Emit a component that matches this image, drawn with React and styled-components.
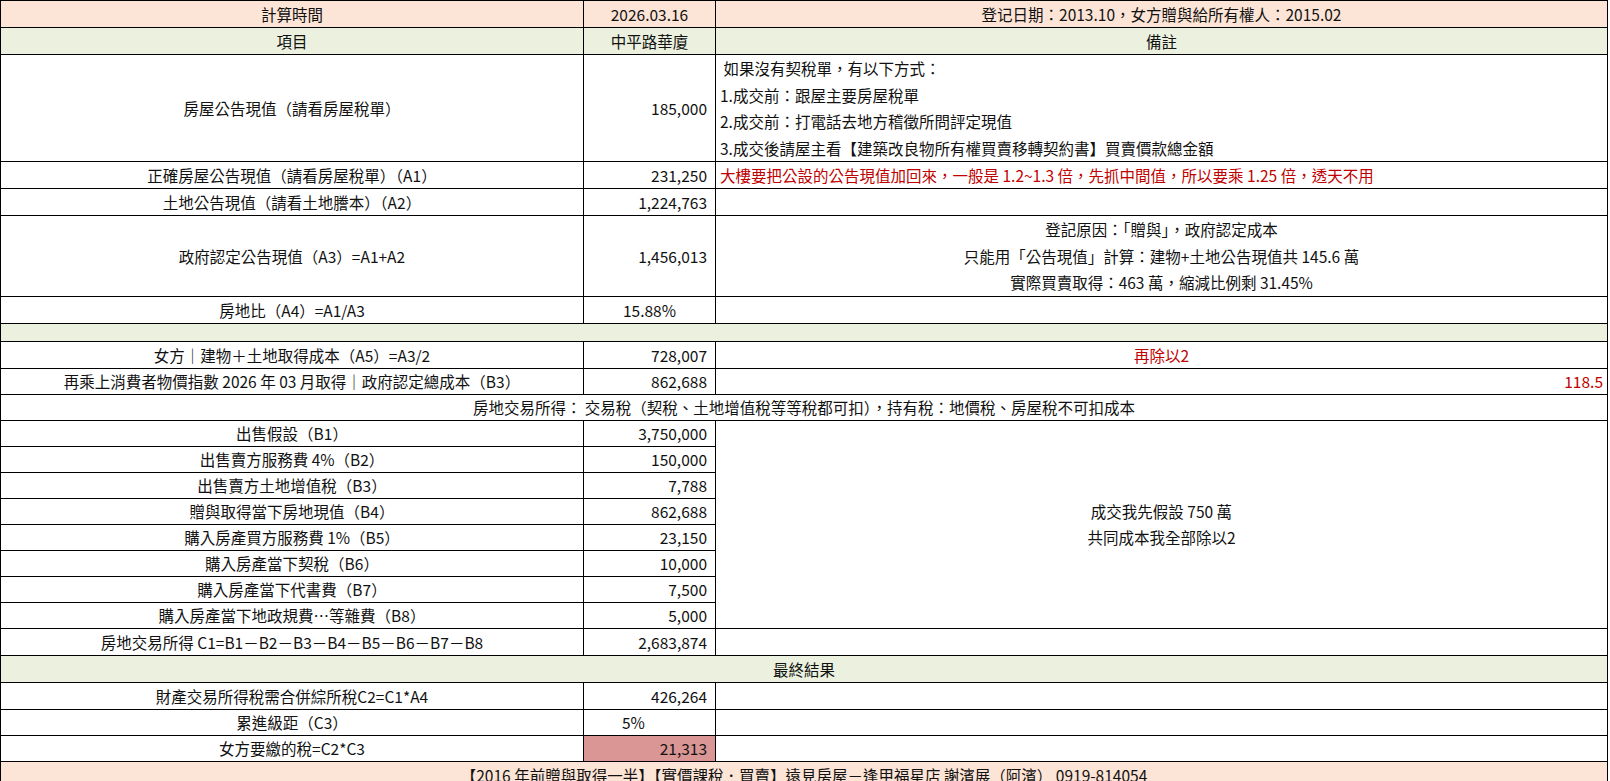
import React from "react"
import styled, { createGlobalStyle } from "styled-components"

const Global = createGlobalStyle`
    body {
        margin: 0;
        background: #fff;
        font-family: "Noto Sans CJK TC", "Liberation Sans", sans-serif;
    }
`

const Sheet = styled.table`
    border-collapse: collapse;
    table-layout: fixed;
    width: 1608px;
    font-size: 15.5px;
    color: #111;
`

const Row = styled.tr`
    height: ${(p) => p.h || 26}px;
    background: ${(p) => (p.tone === "peach" ? "#fce4d6" : p.tone === "green" ? "#ebf1de" : "#fff")};
`

const Cell = styled.td`
    border: 1px solid #000;
    padding: 0 ${(p) => (p.pad != null ? p.pad : 8)}px;
    line-height: 24px;
    white-space: nowrap;
    overflow: hidden;
    text-align: ${(p) => p.align || "center"};
    color: ${(p) => (p.red ? "#c00000" : "inherit")};
    background: ${(p) => (p.hl ? "#da9694" : "transparent")};
    vertical-align: middle;
`

const Lines = styled.div`
    line-height: 26.5px;
`

const rowsA = [
    ["正確房屋公告現值（請看房屋稅單）（A1）", "231,250"],
    ["土地公告現值（請看土地謄本）（A2）", "1,224,763"],
]

const rowsB = [
    ["出售假設（B1）", "3,750,000"],
    ["出售賣方服務費 4%（B2）", "150,000"],
    ["出售賣方土地增值稅（B3）", "7,788"],
    ["贈與取得當下房地現值（B4）", "862,688"],
    ["購入房產買方服務費 1%（B5）", "23,150"],
    ["購入房產當下契稅（B6）", "10,000"],
    ["購入房產當下代書費（B7）", "7,500"],
    ["購入房產當下地政規費…等雜費（B8）", "5,000"],
]

export default function App() {
    return (
        <>
            <Global />
            <Sheet>
                <colgroup>
                    <col style={{ width: 583 }} />
                    <col style={{ width: 132 }} />
                    <col />
                </colgroup>
                <tbody>
                    <Row tone="peach" h={27}>
                        <Cell>計算時間</Cell>
                        <Cell>2026.03.16</Cell>
                        <Cell>登记日期：2013.10，女方贈與給所有權人：2015.02</Cell>
                    </Row>
                    <Row tone="green" h={27}>
                        <Cell>項目</Cell>
                        <Cell>中平路華廈</Cell>
                        <Cell>備註</Cell>
                    </Row>
                    <Row h={107}>
                        <Cell>房屋公告現值（請看房屋稅單）</Cell>
                        <Cell align="right">185,000</Cell>
                        <Cell align="left" pad={4}>
                            <Lines>
                                <div>&nbsp;如果沒有契稅單，有以下方式：</div>
                                <div>1.成交前：跟屋主要房屋稅單</div>
                                <div>2.成交前：打電話去地方稽徵所問評定現值</div>
                                <div>3.成交後請屋主看【建築改良物所有權買賣移轉契約書】買賣價款總金額</div>
                            </Lines>
                        </Cell>
                    </Row>
                    {rowsA.map(([a, b], i) => (
                        <Row key={a} h={27}>
                            <Cell>{a}</Cell>
                            <Cell align="right">{b}</Cell>
                            {i === 0 ? (
                                <Cell align="left" red pad={4}>
                                    大樓要把公設的公告現值加回來，一般是 1.2~1.3 倍，先抓中間值，所以要乘 1.25 倍，透天不用
                                </Cell>
                            ) : (
                                <Cell />
                            )}
                        </Row>
                    ))}
                    <Row h={80}>
                        <Cell>政府認定公告現值（A3）=A1+A2</Cell>
                        <Cell align="right">1,456,013</Cell>
                        <Cell>
                            <Lines>
                                <div>登記原因：「贈與」，政府認定成本</div>
                                <div>只能用「公告現值」計算：建物+土地公告現值共 145.6 萬</div>
                                <div>實際買賣取得：463 萬，縮減比例剩 31.45%</div>
                            </Lines>
                        </Cell>
                    </Row>
                    <Row h={27}>
                        <Cell>房地比（A4）=A1/A3</Cell>
                        <Cell>15.88%</Cell>
                        <Cell />
                    </Row>
                    <Row tone="green" h={18}>
                        <Cell colSpan={3} />
                    </Row>
                    <Row h={27}>
                        <Cell>女方｜建物＋土地取得成本（A5）=A3/2</Cell>
                        <Cell align="right">728,007</Cell>
                        <Cell red>再除以2</Cell>
                    </Row>
                    <Row>
                        <Cell>再乘上消費者物價指數 2026 年 03 月取得｜政府認定總成本（B3）</Cell>
                        <Cell align="right">862,688</Cell>
                        <Cell align="right" red pad={4}>118.5</Cell>
                    </Row>
                    <Row>
                        <Cell colSpan={3}>房地交易所得： 交易稅（契稅、土地增值稅等等稅都可扣），持有稅：地價稅、房屋稅不可扣成本</Cell>
                    </Row>
                    {rowsB.map(([a, b], i) => (
                        <Row key={a}>
                            <Cell>{a}</Cell>
                            <Cell align="right">{b}</Cell>
                            {i === 0 && (
                                <Cell rowSpan={8}>
                                    <Lines>
                                        <div>成交我先假設 750 萬</div>
                                        <div>共同成本我全部除以2</div>
                                    </Lines>
                                </Cell>
                            )}
                        </Row>
                    ))}
                    <Row h={27}>
                        <Cell>房地交易所得 C1=B1－B2－B3－B4－B5－B6－B7－B8</Cell>
                        <Cell align="right">2,683,874</Cell>
                        <Cell />
                    </Row>
                    <Row tone="green" h={27}>
                        <Cell colSpan={3}>最終結果</Cell>
                    </Row>
                    <Row h={27}>
                        <Cell>財產交易所得稅需合併綜所稅C2=C1*A4</Cell>
                        <Cell align="right">426,264</Cell>
                        <Cell />
                    </Row>
                    <Row>
                        <Cell>累進級距（C3）</Cell>
                        <Cell align="left" pad={38}>5%</Cell>
                        <Cell />
                    </Row>
                    <Row>
                        <Cell>女方要繳的稅=C2*C3</Cell>
                        <Cell align="right" hl>21,313</Cell>
                        <Cell />
                    </Row>
                    <Row tone="peach" h={27}>
                        <Cell colSpan={3}>【2016 年前贈與取得一半】【實價課稅．買賣】遠見房屋－逢甲福星店 謝濱展（阿濱） 0919-814054</Cell>
                    </Row>
                </tbody>
            </Sheet>
        </>
    )
}
